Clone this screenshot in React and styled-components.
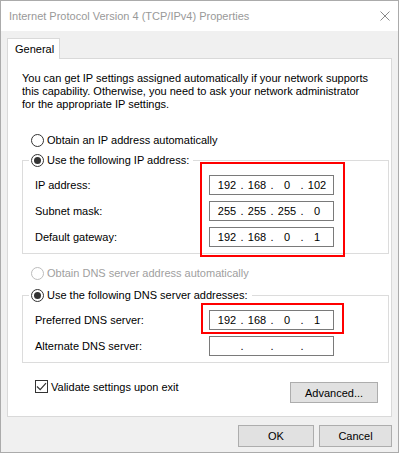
import { Fragment } from "react";
import styled, { createGlobalStyle } from "styled-components";

const GlobalStyle = createGlobalStyle`
  html, body {
    margin: 0;
    padding: 0;
    background: #fff;
  }
  body {
    font-family: "Liberation Sans", Arial, sans-serif;
    font-size: 11px;
    color: #000;
  }
  * {
    box-sizing: border-box;
  }
`;

const Window = styled.div`
  width: 399px;
  height: 453px;
  border: 1px solid #ababab;
  background: #f0f0f0;
  display: flex;
  flex-direction: column;
`;

const TitleBar = styled.div`
  flex: none;
  height: 30px;
  background: #fff;
  display: flex;
  align-items: center;
  justify-content: space-between;
  padding: 0 8px;
`;

const Title = styled.span`
  color: #999;
`;

const CloseButton = styled.button`
  width: 10px;
  height: 10px;
  padding: 0;
  border: 0;
  background: none;
  display: flex;
`;

const Body = styled.div`
  flex: 1;
  display: flex;
  flex-direction: column;
  padding: 7px 6px 0;
`;

const TabStrip = styled.div`
  display: flex;
`;

const Tab = styled.div`
  position: relative;
  z-index: 1;
  width: 53px;
  height: 21px;
  margin-bottom: -1px;
  padding-left: 7px;
  display: flex;
  align-items: center;
  background: #fff;
  border: 1px solid #d9d9d9;
  border-bottom: 0;
`;

const Panel = styled.div`
  display: flex;
  flex-direction: column;
  background: #fff;
  border: 1px solid #d9d9d9;
  padding: 13px 2px 13px 14px;
`;

const Intro = styled.p`
  margin: 0;
  line-height: 13px;
  white-space: nowrap;
`;

const RadioRow = styled.div`
  display: flex;
  align-items: center;
  height: 20px;
  padding-left: 9px;
  margin-top: ${(p) => p.$gap}px;
`;

const Option = styled.label`
  display: inline-flex;
  align-items: center;
  gap: 3px;
  color: ${(p) => (p.$disabled ? "#a0a0a0" : "#000")};
  white-space: nowrap;
`;

const Circle = styled.span`
  width: 13px;
  height: 13px;
  border-radius: 50%;
  border: 1px solid ${(p) => (p.$disabled ? "#bcbcbc" : "#333")};
  background: #fff;
  display: flex;
  align-items: center;
  justify-content: center;
`;

const Dot = styled.span`
  width: 7px;
  height: 7px;
  border-radius: 50%;
  background: #333;
`;

const GroupBox = styled.fieldset`
  margin: ${(p) => p.$gap}px 0 0;
  padding: 0;
  min-width: 0;
  border: 1px solid #dcdcdc;
`;

const Legend = styled.legend`
  height: 20px;
  margin-left: 6px;
  padding: 0 4px 0 2px;
  display: flex;
  align-items: center;
`;

const FieldRows = styled.div`
  position: relative;
  display: grid;
  grid-template-columns: 174px 125px;
  row-gap: 6px;
  align-items: center;
  padding: 5px 0 6px 12px;
`;

// red annotation box drawn over the fields
const Highlight = styled.div`
  position: absolute;
  top: ${(p) => p.$top}px;
  left: ${(p) => p.$left}px;
  width: ${(p) => p.$width}px;
  height: ${(p) => p.$height}px;
  border: 2px solid #f00;
  pointer-events: none;
`;

const IpBox = styled.div`
  width: 125px;
  height: 20px;
  border: 1px solid #7a7a7a;
  background: #fff;
  display: flex;
  align-items: center;
  padding-left: 5px;
`;

const Octet = styled.span`
  width: 24px;
  text-align: center;
`;

const Sep = styled.span`
  width: 6px;
  text-align: center;
`;

const BottomRow = styled.div`
  display: flex;
  justify-content: space-between;
  align-items: flex-start;
  margin-top: 17px;
  padding: 0 11px 0 13px;
`;

const CheckOption = styled.label`
  display: inline-flex;
  align-items: center;
  gap: 3px;
  height: 13px;
`;

const CheckBox = styled.span`
  width: 13px;
  height: 13px;
  border: 1px solid #333;
  background: #fff;
  display: flex;
`;

const Button = styled.button`
  width: ${(p) => p.$width}px;
  height: ${(p) => p.$height}px;
  margin-top: ${(p) => p.$top || 0}px;
  padding: 0;
  background: #e1e1e1;
  border: 1px solid #adadad;
  font: inherit;
  color: #000;
`;

const Footer = styled.div`
  display: flex;
  justify-content: flex-end;
  gap: 5px;
  margin-top: 8px;
`;

const Radio = ({ checked, disabled, children }) => (
  <Option $disabled={disabled}>
    <Circle $disabled={disabled}>{checked && <Dot />}</Circle>
    {children}
  </Option>
);

const IpField = ({ value }) => {
  const parts = value ? value.split(".") : ["", "", "", ""];
  return (
    <IpBox>
      {parts.map((part, i) => (
        <Fragment key={i}>
          {i > 0 && <Sep>.</Sep>}
          <Octet>{part}</Octet>
        </Fragment>
      ))}
    </IpBox>
  );
};

const ipRows = [
  ["IP address:", "192.168.0.102"],
  ["Subnet mask:", "255.255.255.0"],
  ["Default gateway:", "192.168.0.1"],
];

const dnsRows = [
  ["Preferred DNS server:", "192.168.0.1"],
  ["Alternate DNS server:", ""],
];

const Fields = ({ rows, children }) => (
  <FieldRows>
    {rows.map(([label, value]) => (
      <Fragment key={label}>
        <span>{label}</span>
        <IpField value={value} />
      </Fragment>
    ))}
    {children}
  </FieldRows>
);

export default function App() {
  return (
    <>
      <GlobalStyle />
      <Window>
        <TitleBar>
          <Title>Internet Protocol Version 4 (TCP/IPv4) Properties</Title>
          <CloseButton aria-label="Close">
            <svg width="10" height="10" viewBox="0 0 10 10">
              <path d="M0.5 0.5L9.5 9.5M9.5 0.5L0.5 9.5" stroke="#8a8a8a" strokeWidth="1" />
            </svg>
          </CloseButton>
        </TitleBar>
        <Body>
          <TabStrip>
            <Tab>General</Tab>
          </TabStrip>
          <Panel>
            <Intro>
              You can get IP settings assigned automatically if your network supports
              <br />
              this capability. Otherwise, you need to ask your network administrator
              <br />
              for the appropriate IP settings.
            </Intro>

            <RadioRow $gap={19}>
              <Radio>Obtain an IP address automatically</Radio>
            </RadioRow>
            <GroupBox $gap={0}>
              <Legend>
                <Radio checked>Use the following IP address:</Radio>
              </Legend>
              <Fields rows={ipRows}>
                <Highlight $top={-8} $left={177} $width={145} $height={95} />
              </Fields>
            </GroupBox>

            <RadioRow $gap={9}>
              <Radio disabled>Obtain DNS server address automatically</Radio>
            </RadioRow>
            <GroupBox $gap={2}>
              <Legend>
                <Radio checked>Use the following DNS server addresses:</Radio>
              </Legend>
              <Fields rows={dnsRows}>
                <Highlight $top={-2} $left={178} $width={143} $height={31} />
              </Fields>
            </GroupBox>

            <BottomRow>
              <CheckOption>
                <CheckBox>
                  <svg width="11" height="11" viewBox="0 0 11 11">
                    <polyline points="1,5.5 4.2,8.7 10,2.2" fill="none" stroke="#333" strokeWidth="1.2" />
                  </svg>
                </CheckBox>
                Validate settings upon exit
              </CheckOption>
              <Button $width={88} $height={21} $top={2}>
                Advanced...
              </Button>
            </BottomRow>
          </Panel>
          <Footer>
            <Button $width={76} $height={22}>OK</Button>
            <Button $width={73} $height={22}>Cancel</Button>
          </Footer>
        </Body>
      </Window>
    </>
  );
}
